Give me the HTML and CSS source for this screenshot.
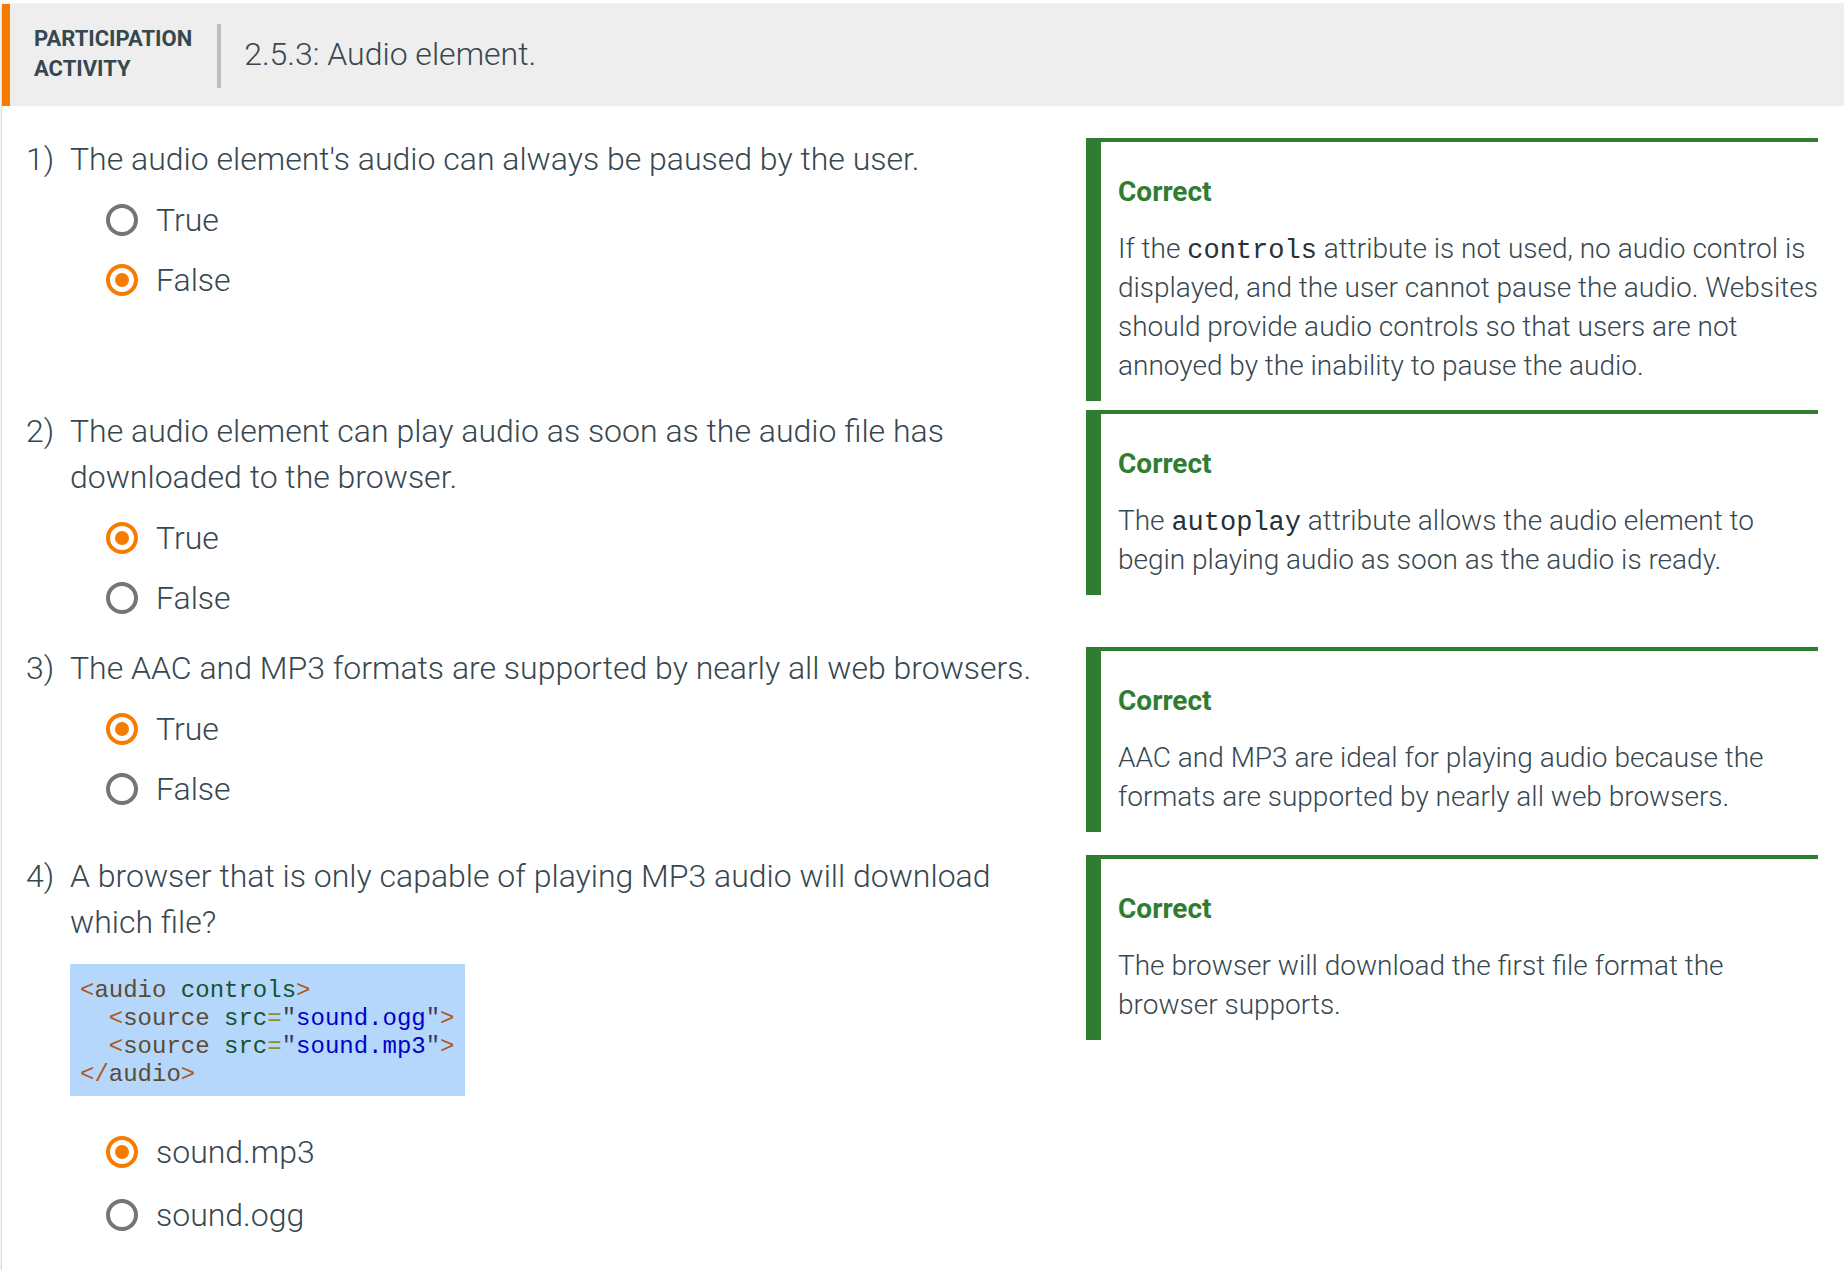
FILE: index.html
```html
<!DOCTYPE html>
<html lang="en">
<head>
<meta charset="utf-8">
<title>2.5.3: Audio element.</title>
<link rel="stylesheet" href="styles.css">
</head>
<body>
<div class="card">
  <header class="act-header">
    <div class="act-label">PARTICIPATION<br>ACTIVITY</div>
    <div class="act-divider"></div>
    <h1 class="act-title">2.5.3: Audio element.</h1>
  </header>
  <div class="act-body">

    <div class="q-row q-row-1">
      <div class="q-main">
        <div class="q-num">1)</div>
        <div class="q-content">
          <div class="q-text">The audio element's audio can always be paused by the user.</div>
          <div class="q-options">
            <div class="opt"><span class="radio"></span><span class="opt-label">True</span></div>
            <div class="opt"><span class="radio checked"></span><span class="opt-label">False</span></div>
          </div>
        </div>
      </div>
      <div class="feedback">
        <div class="fb-title">Correct</div>
        <div class="fb-text">If the <code class="fb-code">controls</code> attribute is not used, no audio control is displayed, and the user cannot pause the audio. Websites should provide audio controls so that users are not annoyed by the inability to pause the audio.</div>
      </div>
    </div>

    <div class="q-row q-row-2">
      <div class="q-main">
        <div class="q-num">2)</div>
        <div class="q-content">
          <div class="q-text">The audio element can play audio as soon as the audio file has downloaded to the browser.</div>
          <div class="q-options">
            <div class="opt"><span class="radio checked"></span><span class="opt-label">True</span></div>
            <div class="opt"><span class="radio"></span><span class="opt-label">False</span></div>
          </div>
        </div>
      </div>
      <div class="feedback">
        <div class="fb-title">Correct</div>
        <div class="fb-text">The <code class="fb-code">autoplay</code> attribute allows the audio element to begin playing audio as soon as the audio is ready.</div>
      </div>
    </div>

    <div class="q-row q-row-3">
      <div class="q-main">
        <div class="q-num">3)</div>
        <div class="q-content">
          <div class="q-text">The AAC and MP3 formats are supported by nearly all web browsers.</div>
          <div class="q-options">
            <div class="opt"><span class="radio checked"></span><span class="opt-label">True</span></div>
            <div class="opt"><span class="radio"></span><span class="opt-label">False</span></div>
          </div>
        </div>
      </div>
      <div class="feedback">
        <div class="fb-title">Correct</div>
        <div class="fb-text">AAC and MP3 are ideal for playing audio because the formats are supported by nearly all web browsers.</div>
      </div>
    </div>

    <div class="q-row q-row-4">
      <div class="q-main">
        <div class="q-num">4)</div>
        <div class="q-content">
          <div class="q-text">A browser that is only capable of playing MP3 audio will download which file?</div>
          <pre class="code-block"><span class="c-p">&lt;</span><span class="c-t">audio</span> <span class="c-a">controls</span><span class="c-p">&gt;</span>
  <span class="c-p">&lt;</span><span class="c-t">source</span> <span class="c-a">src</span><span class="c-e">=</span><span class="c-q">"</span><span class="c-s">sound.ogg</span><span class="c-q">"</span><span class="c-p">&gt;</span>
  <span class="c-p">&lt;</span><span class="c-t">source</span> <span class="c-a">src</span><span class="c-e">=</span><span class="c-q">"</span><span class="c-s">sound.mp3</span><span class="c-q">"</span><span class="c-p">&gt;</span>
<span class="c-p">&lt;/</span><span class="c-t">audio</span><span class="c-p">&gt;</span></pre>
          <div class="q-options q-options-loose">
            <div class="opt"><span class="radio checked"></span><span class="opt-label">sound.mp3</span></div>
            <div class="opt"><span class="radio"></span><span class="opt-label">sound.ogg</span></div>
          </div>
        </div>
      </div>
      <div class="feedback">
        <div class="fb-title">Correct</div>
        <div class="fb-text">The browser will download the first file format the browser supports.</div>
      </div>
    </div>

  </div>
</div>
</body>
</html>
```
FILE: styles.css
```css
html, body {
  margin: 0;
  padding: 0;
  background: #ffffff;
  overflow: hidden;
}

body {
  font-family: Roboto, "Noto Sans", "Liberation Sans", sans-serif;
  color: #37474f;
}

.card {
  margin: 4px 0 0 2px;
  background: #ffffff;
  box-shadow: 0 2px 3px rgba(0, 0, 0, 0.25), 0 0 2px rgba(0, 0, 0, 0.12);
}

/* ---------- header ---------- */
.act-header {
  display: flex;
  align-items: center;
  height: 102px;
  box-sizing: border-box;
  padding: 0 0 3px 24px;
  background: #eeeeee;
  border-left: 8px solid #f57c00;
}

.act-label {
  font-size: 22px;
  font-weight: 700;
  line-height: 30px;
  color: #37474f;
}

.act-divider {
  width: 4px;
  height: 64px;
  margin: 5px 23px 0 25px;
  background: #bdbdbd;
}

.act-title {
  margin: 0;
  font-size: 32px;
  font-weight: 300;
  line-height: normal;
  color: #37474f;
}

/* ---------- body ---------- */
.act-body {
  padding: 30px 26px 24px 24px;
}

.q-row {
  display: grid;
  grid-template-columns: 1fr 732px;
  column-gap: 26px;
  align-items: start;
}

.q-row-1 { margin-bottom: 7px; }
.q-row-2 { margin-bottom: 17px; }
.q-row-3 { margin-bottom: 21px; }
.q-row-4 { margin-bottom: 0; }

.q-main {
  display: grid;
  grid-template-columns: 44px 1fr;
}

.q-num,
.q-text {
  font-size: 32px;
  font-weight: 300;
  line-height: 46px;
}

.q-options {
  margin-top: 8px;
  padding-left: 36px;
}

.opt {
  display: flex;
  align-items: center;
  height: 60px;
}

.q-options-loose .opt {
  height: 63px;
}

.radio {
  position: relative;
  flex: none;
  width: 32px;
  height: 32px;
  box-sizing: border-box;
  border: 4px solid #757575;
  border-radius: 50%;
  background: #ffffff;
}

.radio.checked {
  border-color: #f57c00;
}

.radio.checked::after {
  content: "";
  position: absolute;
  left: 5px;
  top: 5px;
  width: 14px;
  height: 14px;
  border-radius: 50%;
  background: #f57c00;
}

.opt-label {
  margin-left: 18px;
  font-size: 32px;
  font-weight: 300;
  line-height: 60px;
}

/* ---------- code block ---------- */
.code-block {
  display: inline-block;
  margin: 19px 0 16px;
  padding: 13px 10px 7px;
  background: #b4d7fb;
  font-family: "Liberation Mono", "DejaVu Sans Mono", monospace;
  font-size: 24px;
  line-height: 28px;
  color: #333333;
}

.c-p { color: #b0581c; }
.c-t { color: #5e4a33; }
.c-a { color: #145430; }
.c-e { color: #8d8d2c; }
.c-q { color: #3a3a5a; }
.c-s { color: #0000cc; }

/* ---------- feedback ---------- */
.feedback {
  margin-top: 2px;
  border-top: 4px solid #2e7d32;
  border-left: 15px solid #2e7d32;
  padding: 30px 0 16px 17px;
}

.fb-title {
  font-size: 28px;
  font-weight: 700;
  line-height: 39px;
  color: #2e7d32;
}

.fb-text {
  margin: 18px -5px 0 0;
  font-size: 28px;
  font-weight: 300;
  line-height: 39px;
  color: #37474f;
}

.fb-code {
  font-family: "Liberation Mono", "DejaVu Sans Mono", monospace;
  font-size: 27px;
  font-weight: 400;
  line-height: 1;
  color: #263238;
}
```
